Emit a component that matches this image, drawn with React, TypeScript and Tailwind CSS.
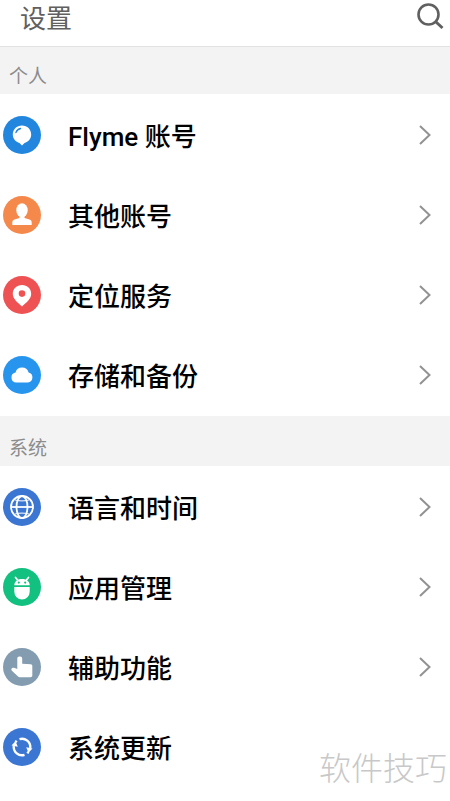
import React from 'react';

interface SettingItem {
  label: string;
  color: string;
  icon: React.ReactNode;
}

interface SettingGroup {
  title: string;
  headerClass: string;
  items: SettingItem[];
}

const BalloonIcon = () => (
  <svg viewBox="0 0 38 38" className="w-full h-full" aria-hidden="true">
    <path d="M19 9.500c-5.300 0-9.200 3.900-9.200 9 0 4.500 3 7.300 6.700 8.600L19 29.500l2.500-2.400c3.700-1.300 6.700-4.100 6.700-8.600 0-5.100-3.900-9-9.200-9z" fill="#fff" />
    <path d="M12.900 16.600c.8-2.200 2.400-3.600 4.700-4.100" fill="none" stroke="#2286de" strokeWidth="1.300" strokeLinecap="round" />
  </svg>
);

const PersonIcon = () => (
  <svg viewBox="0 0 38 38" className="w-full h-full" aria-hidden="true">
    <ellipse cx="19" cy="14.200" rx="5.700" ry="7" fill="#fff" />
    <path d="M9.300 29v-2.500c0-1.500.8-2.400 2.200-2.900l5-1.700v-2h5v2l5 1.700c1.400.5 2.200 1.400 2.200 2.900V29z" fill="#fff" />
  </svg>
);

const PinIcon = () => (
  <svg viewBox="0 0 38 38" className="w-full h-full" aria-hidden="true">
    <path
      d="M19 9c-5.300 0-9.200 3.900-9.200 8.800 0 5.300 5 8.900 9.200 12.700 4.200-3.800 9.200-7.400 9.200-12.700C28.200 12.900 24.300 9 19 9zm0 5.300a3.300 3.300 0 1 1 0 6.600 3.300 3.300 0 0 1 0-6.600z"
      fill="#fff"
      fillRule="evenodd"
    />
  </svg>
);

const CloudIcon = () => (
  <svg viewBox="0 0 38 38" className="w-full h-full" aria-hidden="true">
    <path d="M13.300 26.500a5 5 0 0 1-.8-9.900 6.800 6.800 0 0 1 13.100-.1 5.100 5.100 0 0 1-.7 10z" fill="#fff" />
  </svg>
);

const GlobeIcon = () => (
  <svg viewBox="0 0 38 38" className="w-full h-full" fill="none" stroke="#fff" strokeWidth="1.800" aria-hidden="true">
    <circle cx="19" cy="19" r="11" />
    <ellipse cx="19" cy="19" rx="5.500" ry="11" />
    <path d="M8 19h22" />
    <path d="M11.500 11.800c4.500 1.500 10.500 1.500 15 0M11.500 26.200c4.500-1.500 10.500-1.500 15 0" strokeWidth="1" />
  </svg>
);

const RobotIcon = () => (
  <svg viewBox="0 0 38 38" className="w-full h-full" aria-hidden="true">
    <path d="M12.500 9.500l2.500 3M25.500 9.500l-2.500 3" stroke="#fff" strokeWidth="1.700" strokeLinecap="round" />
    <path d="M11.300 17.300c0-3.800 3-6.300 7.700-6.300s7.700 2.500 7.700 6.300z" fill="#fff" />
    <circle cx="15.800" cy="14.600" r="1.100" fill="#12c07f" />
    <circle cx="22.200" cy="14.600" r="1.100" fill="#12c07f" />
    <path d="M11.300 18.900h15.400v4.900a7.700 7.700 0 0 1-15.400 0z" fill="#fff" />
  </svg>
);

const HandIcon = () => (
  <svg viewBox="0 0 38 38" className="w-full h-full" aria-hidden="true">
    <path
      d="M14.300 10.500c0-1.200.8-2 2-2h.9c1.200 0 2 .8 2 2v5.200l8.500.6c1 .1 1.600.7 1.600 1.700v9.500c0 1-.7 1.700-1.800 1.700H16.800c-.8 0-1.500-.3-2-.9l-5.900-5.600c-1.200-1.200-.3-3 1.200-3 .9 0 2.400.5 4.200 1.300z"
      fill="#fff"
    />
  </svg>
);

const SyncIcon = () => (
  <svg viewBox="0 0 38 38" className="w-full h-full" aria-hidden="true">
    <g fill="none" stroke="#fff" strokeWidth="2.400">
      <path d="M16.500 11.200a8.200 8.200 0 0 1 10.700 8.800" />
      <path d="M21.500 26.800A8.200 8.200 0 0 1 10.800 18" />
      <path d="M24.300 25.300l1.300-1.400M13.700 12.700l-1.300 1.400" />
    </g>
    <path d="M23.200 19.300l6.300 1.200-4 4.300zM14.800 18.700l-6.300-1.200 4-4.300z" fill="#fff" />
  </svg>
);

const groups: SettingGroup[] = [
  {
    title: '个人',
    headerClass: 'pt-4',
    items: [
      { label: 'Flyme 账号', color: 'bg-[#2286de]', icon: <BalloonIcon /> },
      { label: '其他账号', color: 'bg-[#f5894c]', icon: <PersonIcon /> },
      { label: '定位服务', color: 'bg-[#ee5253]', icon: <PinIcon /> },
      { label: '存储和备份', color: 'bg-[#2795ee]', icon: <CloudIcon /> },
    ],
  },
  {
    title: '系统',
    headerClass: 'pt-[19px]',
    items: [
      { label: '语言和时间', color: 'bg-[#3c76d3]', icon: <GlobeIcon /> },
      { label: '应用管理', color: 'bg-[#12c07f]', icon: <RobotIcon /> },
      { label: '辅助功能', color: 'bg-[#839cb0]', icon: <HandIcon /> },
      { label: '系统更新', color: 'bg-[#3c76d3]', icon: <SyncIcon /> },
    ],
  },
];

const SettingRow: React.FC<{ item: SettingItem; showArrow: boolean }> = ({ item, showArrow }) => (
  <li>
    <button type="button" className="flex items-center w-full h-20 pl-[3px] pr-4 text-left">
      <span className={`shrink-0 w-[38px] h-[38px] rounded-full ${item.color}`}>{item.icon}</span>
      <span className="flex-1 ml-[27px] pt-[3px] text-[26px] leading-9 font-medium text-black">{item.label}</span>
      {showArrow && (
        <svg viewBox="0 0 18 24" className="w-[18px] h-6" fill="none" stroke="#929292" strokeWidth="2" aria-hidden="true">
          <path d="M4 3l9.500 9L4 21" />
        </svg>
      )}
    </button>
  </li>
);

const App: React.FC = () => {
  return (
    <div className="relative min-h-screen bg-white font-['Roboto','Noto_Sans_CJK_SC',sans-serif]">
      <header className="flex items-start justify-between pl-5 pr-1.5 pb-[9px] border-b border-[#e2e2e2]">
        <h1 className="pt-px text-[26px] leading-9 text-[#606060]">设置</h1>
        <button type="button" aria-label="搜索" className="pt-[3px]">
          <svg viewBox="0 0 28 28" className="w-7 h-7" fill="none" stroke="#606060" strokeWidth="2.600" aria-hidden="true">
            <circle cx="12.500" cy="11.500" r="10" />
            <path d="M19.500 18.500l7 6.500" strokeWidth="3" />
          </svg>
        </button>
      </header>

      {groups.map((group, index) => (
        <section key={group.title}>
          <h2 className={`pl-[9px] pb-1 bg-[#f3f3f3] text-[19px] leading-[27px] text-[#8c8c8c] ${group.headerClass}`}>
            {group.title}
          </h2>
          <ul className="py-px">
            {group.items.map((item, i) => (
              <SettingRow
                key={item.label}
                item={item}
                showArrow={index === 0 || i < group.items.length - 1}
              />
            ))}
          </ul>
        </section>
      ))}

      <div className="absolute right-[3px] bottom-2 text-[32px] leading-[48px] font-light text-[#c8c8c8]">
        软件技巧
      </div>
    </div>
  );
};

export default App;
